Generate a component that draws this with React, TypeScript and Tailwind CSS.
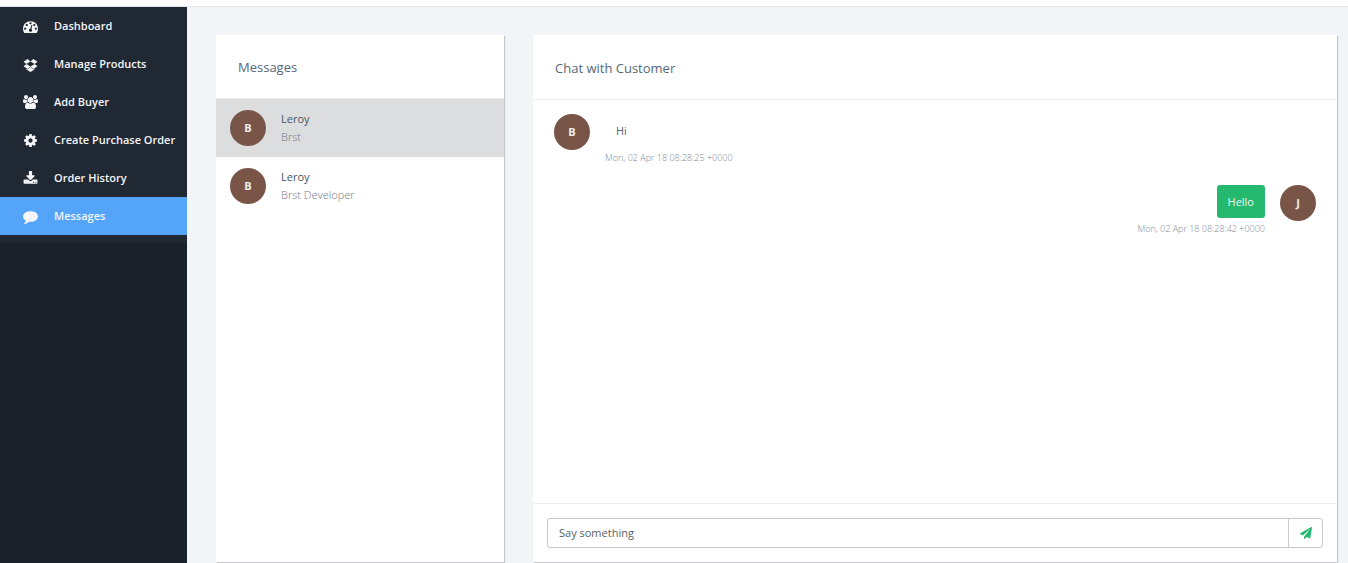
import React from 'react';
import { FaPaperPlane } from 'react-icons/fa';

interface GlyphProps {
  viewBox?: string;
  className?: string;
  d: string;
}

const Glyph: React.FC<GlyphProps> = ({ viewBox = '0 0 1792 1792', className = 'size-[14px]', d }) => (
  <svg viewBox={viewBox} className={className} fill="currentColor" aria-hidden="true">
    <path d={d} />
  </svg>
);

const gaugePath =
  'M384 1152q0-53-37.5-90.5t-90.5-37.5-90.5 37.5-37.5 90.5 37.5 90.5 90.5 37.5 90.5-37.5 37.5-90.5zm192-448q0-53-37.5-90.5t-90.5-37.5-90.5 37.5-37.5 90.5 37.5 90.5 90.5 37.5 90.5-37.5 37.5-90.5zm428 481l101-382q6-26-7.5-48.5t-38.5-29.5-48 6.5-30 39.5l-101 382q-60 5-107 43.5t-63 98.5q-20 77 20 146t117 89 146-20 89-117q16-60-6-117t-72-91zm660-33q0-53-37.5-90.5t-90.5-37.5-90.5 37.5-37.5 90.5 37.5 90.5 90.5 37.5 90.5-37.5 37.5-90.5zm-640-640q0-53-37.5-90.5t-90.5-37.5-90.5 37.5-37.5 90.5 37.5 90.5 90.5 37.5 90.5-37.5 37.5-90.5zm448 192q0-53-37.5-90.5t-90.5-37.5-90.5 37.5-37.5 90.5 37.5 90.5 90.5 37.5 90.5-37.5 37.5-90.5zm320 448q0 261-141 483-19 29-54 29h-1402q-35 0-54-29-141-221-141-483 0-182 71-348t191-286 286-191 348-71 348 71 286 191 191 286 71 348z';
const boxPath =
  'M402 829l494 305-342 285-490-319zm980 556v108l-490 293-490-293v-108l147 96 343-285 343 285zM554 240l342 285-494 304-338-270zm836 589l338 271-489 319-343-285zM1239 240l489 319-338 270-494-304z';
const groupPath =
  'M593 896q-162 5-265 128h-134q-82 0-138-40.5t-56-118.5q0-353 124-353 6 0 43.5 21t97.5 42.5 119 21.5q67 0 133-23-5 37-5 66 0 139 81 256zm1071 637q0 120-73 189.5t-194 69.5h-874q-121 0-194-69.5t-73-189.5q0-53 3.5-103.5t14-109 26.5-108.5 43-97.5 62-81 85.5-53.5 111.5-20q10 0 43 21.5t73 48 107 48 135 21.5 135-21.5 107-48 73-48 43-21.5q61 0 111.5 20t85.5 53.5 62 81 43 97.5 26.5 108.5 14 109 3.5 103.5zm-1024-1277q0 106-75 181t-181 75-181-75-75-181 75-181 181-75 181 75 75 181zm704 384q0 159-112.5 271.5t-271.5 112.5-271.5-112.5-112.5-271.5 112.5-271.5 271.5-112.5 271.5 112.5 112.5 271.5zm576 225q0 78-56 118.5t-138 40.5h-134q-103-123-265-128 81-117 81-256 0-29-5-66 66 23 133 23 59 0 119-21.5t97.5-42.5 43.5-21q124 0 124 353zm-128-609q0 106-75 181t-181 75-181-75-75-181 75-181 181-75 181 75 75 181z';
const cogPath =
  'M1152 896q0-106-75-181t-181-75-181 75-75 181 75 181 181 75 181-75 75-181zm512-109v222q0 12-8 23t-20 13l-185 28q-19 54-39 91 35 50 107 138 10 12 10 25t-9 23q-27 37-99 108t-94 71q-12 0-26-9l-138-108q-44 23-91 38-16 136-29 186-7 28-36 28h-222q-14 0-24.5-8.5t-11.5-21.5l-28-184q-49-16-90-37l-141 107q-10 9-25 9-14 0-25-11-126-114-165-168-7-10-7-23 0-12 8-23 15-21 51-66.5t54-70.5q-27-50-41-99l-183-27q-13-2-21-12.5t-8-23.5v-222q0-12 8-23t19-13l186-28q14-46 39-92-40-57-107-138-10-12-10-24 0-10 9-23 26-36 98.5-107.5t94.5-71.5q13 0 26 10l138 107q44-23 91-38 16-136 29-186 7-28 36-28h222q14 0 24.5 8.5t11.5 21.5l28 184q49 16 90 37l142-107q9-9 24-9 13 0 25 10 129 119 165 170 7 8 7 22 0 12-8 23-15 21-51 66.5t-54 70.5q26 50 41 98l183 28q13 2 21 12.5t8 23.5z';
const downloadPath =
  'M1344 1344q0-26-19-45t-45-19-45 19-19 45 19 45 45 19 45-19 19-45zm256 0q0-26-19-45t-45-19-45 19-19 45 19 45 45 19 45-19 19-45zm128-224v320q0 40-28 68t-68 28h-1472q-40 0-68-28t-28-68v-320q0-40 28-68t68-28h465l135 136q58 56 136 56t136-56l136-136h464q40 0 68 28t28 68zm-325-569q17 41-14 70l-448 448q-18 19-45 19t-45-19l-448-448q-31-29-14-70 17-39 59-39h256v-448q0-26 19-45t45-19h256q26 0 45 19t19 45v448h256q42 0 59 39z';
const commentPath =
  'M1792 896q0 174-120 321.5t-326 233-450 85.5q-70 0-145-8-198 175-460 242-49 14-114 22-17 2-30.5-9t-17.5-29v-1q-3-4-.5-12t2-10 4.5-9.5l6-9 7-8.5 8-9q7-8 31-34.5t34.5-38 31-39.5 32.5-51 27-59 26-76q-157-89-247.5-220t-90.5-281q0-130 71-248.5t191-204.5 286-136.5 348-50.5q244 0 450 85.5t326 233 120 321.5z';

const navItems = [
  { label: 'Dashboard', icon: <Glyph d={gaugePath} className="size-[15px]" /> },
  { label: 'Manage Products', icon: <Glyph d={boxPath} className="size-[15px]" /> },
  { label: 'Add Buyer', icon: <Glyph d={groupPath} viewBox="0 0 1920 1792" className="h-[14px] w-[15px]" /> },
  { label: 'Create Purchase Order', icon: <Glyph d={cogPath} className="size-[15px]" /> },
  { label: 'Order History', icon: <Glyph d={downloadPath} className="size-[15px]" /> },
  { label: 'Messages', icon: <Glyph d={commentPath} className="size-[15px]" />, active: true },
];

const contacts = [
  { name: 'Leroy', company: 'Brst', active: true },
  { name: 'Leroy', company: 'Brst Developer', active: false },
];

const Avatar: React.FC<{ letter: string }> = ({ letter }) => (
  <span className="flex size-9 shrink-0 items-center justify-center rounded-full bg-[#795548] text-[11px] font-bold text-[#eeeeee]">
    {letter}
  </span>
);

const Sidebar: React.FC = () => (
  <aside className="w-[187px] shrink-0 bg-[#1b222c]">
    <nav className="bg-[#1f2833] pb-2">
      {navItems.map((item) => (
        <a
          key={item.label}
          href="#"
          aria-current={item.active ? 'page' : undefined}
          className={`flex h-[38px] items-center pl-[23px] text-[11px] font-semibold whitespace-nowrap text-[#f4f5f7] ${
            item.active ? 'bg-[#54a5fa]' : ''
          }`}
        >
          <span className="flex w-[15px] justify-center">{item.icon}</span>
          <span className="ml-4">{item.label}</span>
        </a>
      ))}
    </nav>
  </aside>
);

const ContactList: React.FC = () => (
  <section className="w-72 shrink-0 bg-white shadow-[1px_1px_1px_#c4c8cc]">
    <h2 className="h-16 border-b border-[#ebedee] px-[22px] pt-5 text-[13px] leading-6 text-[#566878]">
      Messages
    </h2>
    <ul>
      {contacts.map((contact) => (
        <li key={contact.company}>
          <button
            type="button"
            className={`flex h-[58px] w-full items-center gap-[15px] pl-[14px] text-left text-[11px] ${
              contact.active ? 'bg-[#dcddde]' : 'bg-white'
            }`}
          >
            <Avatar letter="B" />
            <span className="flex flex-col leading-[18px]">
              <span className="font-medium text-[#455664]">{contact.name}</span>
              <span className="font-light text-[#707a87]">{contact.company}</span>
            </span>
          </button>
        </li>
      ))}
    </ul>
  </section>
);

const Chat: React.FC = () => (
  <section className="flex min-w-0 flex-1 flex-col bg-white shadow-[1px_1px_1px_#c4c8cc]">
    <h2 className="h-[65px] border-b border-[#ebedee] px-[22px] pt-[21px] text-[13px] leading-6 text-[#566878]">
      Chat with Customer
    </h2>
    <div className="flex flex-1 flex-col gap-5 px-[21px] pt-[14px]">
      <div className="flex gap-[15px]">
        <Avatar letter="B" />
        <div>
          <p className="px-[11px] py-2 text-[11px] leading-[17px] text-[#566878]">Hi</p>
          <time className="mt-1 block text-[9px] leading-[14px] font-light text-[#828c97]">
            Mon, 02 Apr 18 08:28:25 +0000
          </time>
        </div>
      </div>
      <div className="flex justify-end gap-[15px]">
        <div className="flex flex-col items-end">
          <p className="rounded-[3px] bg-[#25b86f] px-[11px] py-2 text-[11px] leading-[17px] text-[#eefaf3]">Hello</p>
          <time className="mt-1 block text-[9px] leading-[14px] font-light text-[#828c97]">
            Mon, 02 Apr 18 08:28:42 +0000
          </time>
        </div>
        <Avatar letter="J" />
      </div>
    </div>
    <form className="border-t border-[#ebedee] p-[14px]" onSubmit={(e) => e.preventDefault()}>
      <div className="flex h-[30px] overflow-hidden rounded-[3px] border border-[#c8c9ca]">
        <input
          type="text"
          aria-label="Message"
          placeholder="Say something"
          className="min-w-0 flex-1 px-[11px] text-[11px] text-[#555f69] outline-none placeholder:text-[#555f69]"
        />
        <button
          type="submit"
          aria-label="Send"
          className="flex w-[34px] items-center justify-center border-l border-[#c8c9ca] text-[#25b86f]"
        >
          <FaPaperPlane className="size-3" />
        </button>
      </div>
    </form>
  </section>
);

const App: React.FC = () => {
  return (
    <div className="flex min-h-screen flex-col bg-[#f1f5f8] font-['Open_Sans','Noto_Sans',sans-serif]">
      <header className="h-[7px] border-b border-[#e3e6ea] bg-white" />
      <div className="flex flex-1">
        <Sidebar />
        <main className="flex min-w-0 flex-1 gap-[29px] pt-7 pr-[11px] pb-px pl-[29px]">
          <ContactList />
          <Chat />
        </main>
      </div>
    </div>
  );
};

export default App;
